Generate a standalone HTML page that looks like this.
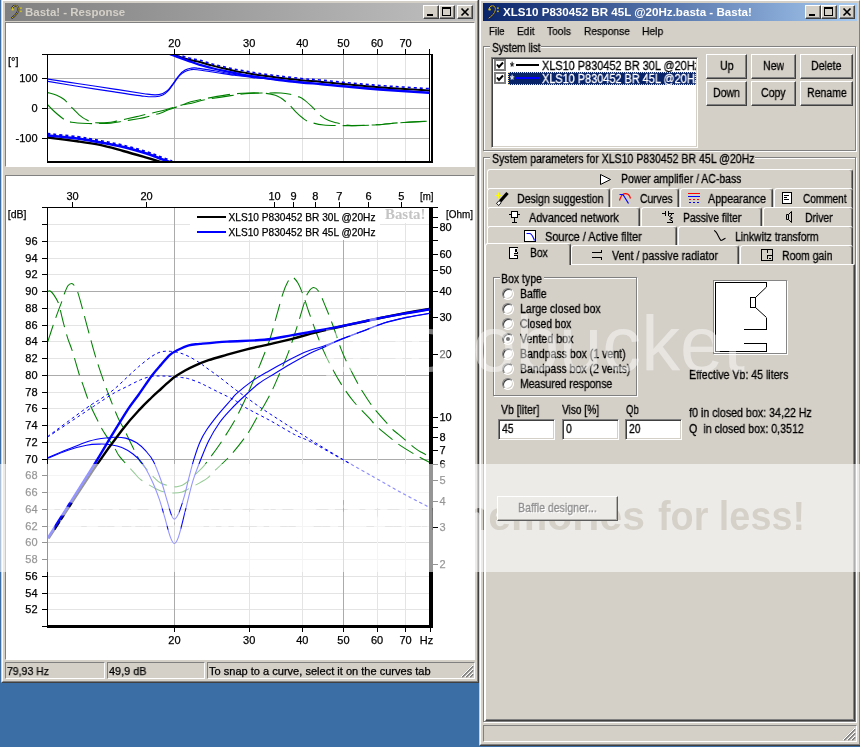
<!DOCTYPE html>
<html lang="en"><head><meta charset="utf-8"><title>Basta!</title>
<style>

html,body{margin:0;padding:0;background:#3a6ea5;}
#desk{position:relative;width:860px;height:747px;overflow:hidden;background:#3a6ea5;font-family:"Liberation Sans",sans-serif;}
#desk *{box-sizing:border-box;}
.abs,.t,.win,.btn,.tab,.grp,.sunk,.cap,.tbtn,.panel,.radio,.inp{position:absolute;}
.t{white-space:pre;line-height:14px;transform-origin:0 0;color:#000;will-change:transform;}
.ms{font:12.3px/14px "Liberation Sans",sans-serif;-webkit-text-stroke:.3px;}
.th{font:11px/14px "Liberation Sans",sans-serif;-webkit-text-stroke:.25px;}
.tb{font:bold 11px/14px "Liberation Sans",sans-serif;}
.win{background:#d4d0c8;}
.win .e1{position:absolute;left:0;top:0;right:0;bottom:0;border:1px solid;border-color:#d4d0c8 #404040 #404040 #d4d0c8;}
.win .e2{position:absolute;left:1px;top:1px;right:1px;bottom:1px;border:1px solid;border-color:#fff #808080 #808080 #fff;}
.cap{height:18px;}
.tbtn{width:16px;height:14px;background:#d4d0c8;border:1px solid;border-color:#fff #404040 #404040 #fff;box-shadow:inset -1px -1px 0 #808080;}
.panel{background:#fff;border:1px solid;border-color:#808080 #fff #fff #808080;}
.sb{position:absolute;border:1px solid;border-color:#808080 #fff #fff #808080;}
.btn{background:#d4d0c8;border:1px solid;border-color:#fff #404040 #404040 #fff;box-shadow:inset -1px -1px 0 #808080, inset 1px 1px 0 #d4d0c8;}
.grp{border:1px solid #808080;box-shadow:inset 1px 1px 0 #fff, 1px 1px 0 #fff;}
.sunk{background:#fff;border:1px solid;border-color:#808080 #fff #fff #808080;box-shadow:inset 1px 1px 0 #404040, inset -1px -1px 0 #d4d0c8;}
.tab{background:#d4d0c8;border:1px solid;border-color:#fff #404040 transparent #fff;border-bottom:0;border-radius:3px 3px 0 0;box-shadow:inset -1px 0 0 #808080;}
.radio{width:12px;height:12px;border-radius:50%;background:#fff;border:1px solid;border-color:#808080 #fff #fff #808080;box-shadow:inset 1px 1px 0 #404040, inset -1px -1px 0 #d4d0c8;}
.radio.on:after{content:"";position:absolute;left:3px;top:3px;width:4px;height:4px;border-radius:50%;background:#000;}
.chk{position:absolute;width:12px;height:12px;background:#fff;border:2px solid #808080;}
.g{background:#d4d0c8;}
svg{position:absolute;left:0;top:0;overflow:visible;}
svg.charts{left:0;top:0;will-change:transform;}

</style></head>
<body>
<div id="desk">
<div class="win" style="left:1px;top:-1px;width:478px;height:684px"><div class="e1"></div><div class="e2"></div></div>
<div class="cap abs" style="left:5px;top:3px;width:470px;background:linear-gradient(90deg,#808080,#c0c0c0)"></div>
<svg width="16" height="16" viewBox="0 0 16 16" style="left:9px;top:4px"><path d="M3.2,5.2C3,2.8 5,1.6 6.8,1.8C9.2,2 9.8,4.6 9,7C8,10 5.6,12.2 3,14" fill="none" stroke="#14144a" stroke-width="1.8" stroke-linecap="round"/><path d="M3.2,5.2C3,2.8 5,1.6 6.8,1.8C9.2,2 9.8,4.6 9,7C8,10 5.6,12.2 3,14" fill="none" stroke="#d0be10" stroke-width="1" stroke-linecap="round" stroke-dasharray="1.8 1"/><circle cx="3.6" cy="5.4" r="1.2" fill="#d8c818"/><rect x="11.2" y="3.4" width="1.5" height="1.5" fill="#d8c818"/><rect x="11.2" y="6.6" width="1.5" height="1.5" fill="#d8c818"/></svg>
<span class="t tb" style="left:24.6px;top:4.5px;transform:scaleX(1.044);color:#d4d0c8">Basta! - Response</span>
<div class="tbtn" style="left:423px;top:5px"><div class="abs" style="left:3px;top:8px;width:6px;height:2px;background:#000"></div></div>
<div class="tbtn" style="left:439px;top:5px"><div class="abs" style="left:2px;top:1px;width:9px;height:9px;border:1px solid #000;border-top-width:2px"></div></div>
<div class="tbtn" style="left:457px;top:5px"><svg width="14" height="12" viewBox="0 0 14 12" style="left:0;top:0"><path d="M3.5,2.5L10.5,9.5M10.5,2.5L3.5,9.5" stroke="#000" stroke-width="1.7" fill="none"/></svg></div>
<div class="panel" style="left:5px;top:22px;width:470px;height:145px"></div>
<div class="panel" style="left:5px;top:175px;width:470px;height:485px"></div>
<div class="sb" style="left:5px;top:662px;width:100px;height:17px"></div>
<div class="sb" style="left:107px;top:662px;width:98px;height:17px"></div>
<div class="sb" style="left:207px;top:662px;width:268px;height:17px"></div>
<span class="t th" style="left:7.0px;top:664.2px;transform:scaleX(0.954);">79,93 Hz</span>
<span class="t th" style="left:109.0px;top:664.2px;transform:scaleX(0.989);">49,9 dB</span>
<span class="t th" style="left:209.0px;top:664.2px;transform:scaleX(1.004);">To snap to a curve, select it on the curves tab</span>
<svg width="13" height="13" viewBox="0 0 13 13" style="left:461px;top:665px" shape-rendering="crispEdges"><path d="M12,1L1,12M12,5L5,12M12,9L9,12" stroke="#808080" stroke-width="2" fill="none" shape-rendering="auto"/><path d="M12,0L0,12M12,4L4,12M12,8L8,12" stroke="#fff" stroke-width="1" fill="none" shape-rendering="auto"/></svg>
<svg class="charts" width="480" height="690" viewBox="0 0 480 690" font-family="'Liberation Sans',sans-serif" font-size="11" stroke-width="0">
<defs><clipPath id="cpP"><rect x="48" y="55" width="381" height="107"/></clipPath><clipPath id="cpM"><rect x="48" y="208" width="381" height="417"/></clipPath></defs>
<g shape-rendering="crispEdges" stroke-width="1" fill="none">
<line x1="174.5" y1="55" x2="174.5" y2="161" stroke="#b4b4b4"/>
<line x1="249.5" y1="55" x2="249.5" y2="161" stroke="#e2e2e2"/>
<line x1="302.5" y1="55" x2="302.5" y2="161" stroke="#e2e2e2"/>
<line x1="343.5" y1="55" x2="343.5" y2="161" stroke="#b4b4b4"/>
<line x1="377.5" y1="55" x2="377.5" y2="161" stroke="#e2e2e2"/>
<line x1="405.5" y1="55" x2="405.5" y2="161" stroke="#e2e2e2"/>
<line x1="48" y1="78.5" x2="429" y2="78.5" stroke="#b4b4b4"/>
<line x1="48" y1="108.5" x2="429" y2="108.5" stroke="#b4b4b4"/>
<line x1="48" y1="138.5" x2="429" y2="138.5" stroke="#b4b4b4"/>
</g>
<g clip-path="url(#cpP)" fill="none">
<path d="M47.4,104.5C48.6,105.8 52.1,109.5 54.9,112.0C57.7,114.5 61.4,117.7 64.2,119.4C67.0,121.1 67.6,121.5 71.6,122.2C75.6,122.9 84.4,123.3 88.4,123.5C92.4,123.7 92.1,123.6 95.8,123.5C99.5,123.4 106.7,123.4 110.7,123.1C114.7,122.8 115.7,122.4 120.0,121.7C124.3,121.0 132.7,119.7 136.7,119.0C140.7,118.3 140.2,118.6 144.2,117.6C148.2,116.6 156.9,114.2 160.9,112.9C164.9,111.6 164.7,111.0 168.4,109.7C172.1,108.4 179.3,106.0 183.3,104.9C187.3,103.8 188.7,103.9 192.6,103.0C196.5,102.1 200.2,100.7 206.5,99.5C212.8,98.3 223.6,96.6 230.7,95.6C237.8,94.6 243.4,93.8 249.3,93.4C255.2,93.0 260.7,93.1 266.0,93.0C271.3,92.9 276.9,92.8 280.9,93.0C284.9,93.2 287.1,93.6 290.2,94.3C293.3,95.0 297.2,96.2 299.5,97.1C301.8,98.0 302.2,98.4 304.2,99.9C306.2,101.4 308.6,103.6 311.4,106.2C314.2,108.8 318.0,113.4 320.9,115.8C323.8,118.2 326.2,119.4 328.8,120.6C331.4,121.8 332.5,122.0 336.3,122.8C340.1,123.6 344.9,125.3 351.6,125.6C358.4,125.9 368.9,125.3 376.8,124.8C384.7,124.3 391.2,123.4 399.1,122.8C407.0,122.2 418.9,121.7 424.2,121.4C429.5,121.1 429.9,120.9 431.0,120.8" stroke="#008000" stroke-width="1.1" stroke-dasharray="22 7"/>
<path d="M47.4,92.4C49.0,92.9 53.9,94.0 56.7,95.2C59.5,96.4 62.0,97.8 64.2,99.5C66.4,101.2 67.3,103.0 69.8,105.5C72.3,108.0 76.2,112.3 79.1,114.8C82.0,117.3 84.6,119.0 87.4,120.3C90.2,121.6 91.9,122.5 95.8,122.8C99.7,123.1 106.7,122.6 110.7,122.2C114.7,121.8 115.7,121.2 120.0,120.3C124.3,119.4 132.7,117.5 136.7,116.6C140.7,115.7 140.2,115.7 144.2,114.8C148.2,113.9 156.6,112.1 160.9,111.0C165.2,109.9 166.5,109.4 170.2,108.3C173.9,107.2 179.9,105.6 183.3,104.5C186.7,103.4 186.8,102.7 190.7,101.7C194.6,100.7 199.8,99.6 206.5,98.4C213.2,97.2 223.6,95.2 230.7,94.3C237.8,93.4 243.4,93.2 249.3,93.0C255.2,92.8 261.7,93.0 266.0,93.4C270.3,93.8 272.8,94.4 275.3,95.2C277.8,96.0 279.1,96.9 280.9,98.0C282.7,99.1 284.8,101.0 286.0,101.9C287.2,102.8 286.8,101.9 288.4,103.6C290.0,105.2 293.3,109.3 295.8,111.8C298.3,114.3 301.0,116.8 303.3,118.5C305.6,120.2 306.4,120.9 309.8,122.0C313.2,123.1 318.1,124.4 323.7,125.0C329.3,125.6 338.6,125.5 343.3,125.6C348.0,125.7 346.0,125.7 351.6,125.6C357.2,125.5 368.9,125.3 376.8,124.8C384.7,124.3 391.2,123.4 399.1,122.8C407.0,122.2 418.9,121.7 424.2,121.4C429.5,121.1 429.9,120.9 431.0,120.8" stroke="#008000" stroke-width="1.1" stroke-dasharray="22 7"/>
<path d="M47.4,79.0C52.4,79.8 66.0,81.8 77.2,83.5C88.4,85.2 103.2,87.4 114.4,89.1C125.6,90.8 137.4,92.7 144.2,93.7C151.0,94.7 152.2,95.0 155.3,94.9C158.4,94.9 160.6,94.3 162.8,93.4C165.0,92.5 166.5,91.6 168.4,89.7C170.3,87.8 172.2,84.7 174.0,82.2C175.8,79.7 177.7,76.8 179.5,74.8C181.3,72.8 183.2,71.2 185.1,70.1C187.0,69.0 188.7,68.6 190.7,68.3C192.7,68.0 193.0,67.6 197.2,68.1C201.4,68.5 209.6,70.0 215.8,71.0C222.0,72.0 228.2,73.4 234.4,74.4C240.6,75.4 247.1,76.2 253.0,77.0C258.9,77.8 258.8,77.7 270.0,78.9C281.2,80.1 293.2,81.7 320.0,84.0C346.8,86.3 412.5,91.4 431.0,92.9" stroke="#0000ff" stroke-width="1.1"/>
<path d="M47.4,81.3C52.4,82.1 66.0,84.5 77.2,86.3C88.4,88.1 103.2,90.2 114.4,91.9C125.6,93.6 137.4,95.4 144.2,96.2C151.0,97.0 152.2,96.9 155.3,96.7C158.4,96.5 160.6,95.9 162.8,94.9C165.0,93.9 166.5,92.6 168.4,90.6C170.3,88.6 172.2,85.6 174.0,83.1C175.8,80.6 177.7,77.7 179.5,75.7C181.3,73.8 183.2,72.4 185.1,71.4C187.0,70.4 188.7,70.0 190.7,69.7C192.7,69.4 193.0,69.2 197.2,69.7C201.4,70.2 209.6,71.6 215.8,72.5C222.0,73.4 228.2,74.5 234.4,75.3C240.6,76.1 247.1,77.0 253.0,77.6C258.9,78.2 258.8,77.9 270.0,79.0C281.2,80.1 293.2,81.7 320.0,84.0C346.8,86.3 412.5,91.4 431.0,92.9" stroke="#0000ff" stroke-width="1.1"/>
<path d="M47.4,137.5C52.4,138.1 68.4,140.1 77.2,141.3C86.0,142.5 92.3,143.3 100.0,144.9C107.7,146.5 115.5,148.9 123.3,151.0C131.1,153.1 140.3,155.8 146.5,157.6C152.7,159.4 157.2,160.8 160.5,161.8C163.8,162.8 165.1,163.2 166.0,163.5" stroke="#000" stroke-width="2.4"/>
<path d="M47.4,135.5C52.4,136.0 68.4,137.3 77.2,138.5C86.0,139.7 92.3,141.0 100.0,142.4C107.7,143.8 115.5,145.2 123.3,147.1C131.1,148.9 140.3,151.6 146.5,153.5C152.7,155.4 156.6,157.3 160.5,158.7C164.4,160.1 167.9,161.3 169.8,162.0C171.7,162.7 171.6,162.8 172.0,163.0" stroke="#0000ff" stroke-width="2.6"/>
<path d="M47.4,133.9C52.4,134.4 68.4,135.8 77.2,136.9C86.0,138.1 92.3,139.4 100.0,140.8C107.7,142.2 115.5,143.7 123.3,145.5C131.1,147.3 140.3,150.0 146.5,151.9C152.7,153.8 156.6,155.7 160.5,157.1C164.4,158.5 167.9,159.7 169.8,160.4C171.7,161.1 171.6,161.2 172.0,161.4" stroke="#0000ff" stroke-width="2.2" stroke-dasharray="3 3"/>
<path d="M171.0,54.0C173.9,54.9 183.5,58.2 188.3,59.5C193.1,60.8 196.0,61.0 199.9,62.0C203.8,63.0 207.6,64.4 211.5,65.4C215.4,66.5 219.2,67.4 223.1,68.3C227.0,69.2 230.9,70.1 234.8,70.9C238.7,71.7 242.5,72.3 246.4,73.0C250.3,73.7 252.6,74.2 258.0,75.0C263.4,75.8 271.9,76.8 279.1,77.7C286.3,78.6 294.6,79.5 301.4,80.2C308.2,80.9 313.0,81.1 320.0,81.7C327.0,82.3 333.4,83.1 343.3,84.0C353.2,84.9 364.9,86.1 379.5,87.2C394.1,88.3 422.4,90.0 431.0,90.5" stroke="#000" stroke-width="2"/>
<path d="M170.0,54.2C171.1,54.6 173.5,55.6 176.6,56.7C179.7,57.8 184.4,59.4 188.3,60.8C192.2,62.2 196.0,63.7 199.9,64.9C203.8,66.1 207.6,67.0 211.5,68.0C215.4,69.0 219.2,69.9 223.1,70.7C227.0,71.5 230.9,72.2 234.8,73.0C238.7,73.8 242.5,74.6 246.4,75.3C250.3,76.0 252.6,76.3 258.0,77.1C263.4,77.9 271.9,79.1 279.1,80.0C286.3,80.9 294.6,81.8 301.4,82.5C308.2,83.2 313.0,83.4 320.0,84.0C327.0,84.6 333.4,85.4 343.3,86.3C353.2,87.2 364.9,88.4 379.5,89.5C394.1,90.6 422.4,92.3 431.0,92.9" stroke="#0000ff" stroke-width="2.3"/>
<path d="M171.0,52.3C173.9,53.2 183.5,56.5 188.3,57.8C193.1,59.1 196.0,59.3 199.9,60.3C203.8,61.3 207.6,62.7 211.5,63.7C215.4,64.8 219.2,65.7 223.1,66.6C227.0,67.5 230.9,68.4 234.8,69.2C238.7,70.0 242.5,70.6 246.4,71.3C250.3,72.0 252.6,72.5 258.0,73.3C263.4,74.1 271.9,75.1 279.1,76.0C286.3,76.9 294.6,77.8 301.4,78.5C308.2,79.2 313.0,79.4 320.0,80.0C327.0,80.6 333.4,81.4 343.3,82.3C353.2,83.2 364.9,84.4 379.5,85.5C394.1,86.6 422.4,88.2 431.0,88.8" stroke="#0000ff" stroke-width="1.6" stroke-dasharray="3 3"/>
</g>
<g shape-rendering="crispEdges" fill="#000">
<rect x="42" y="54" width="391" height="1"/>
<rect x="47" y="54" width="1" height="109"/>
<rect x="47" y="161" width="386" height="2"/>
<rect x="429" y="49" width="1" height="114"/>
<rect x="431" y="54" width="2" height="109"/>
<rect x="174" y="49" width="1" height="5"/>
<rect x="249" y="49" width="1" height="5"/>
<rect x="302" y="49" width="1" height="5"/>
<rect x="343" y="49" width="1" height="5"/>
<rect x="377" y="49" width="1" height="5"/>
<rect x="405" y="49" width="1" height="5"/>
<rect x="42" y="78" width="5" height="1"/>
<rect x="42" y="108" width="5" height="1"/>
<rect x="42" y="138" width="5" height="1"/>
</g>
<g fill="#000" stroke="#000" stroke-width=".25">
<text x="174.4" y="46.5" text-anchor="middle">20</text>
<text x="249.2" y="46.5" text-anchor="middle">30</text>
<text x="302.3" y="46.5" text-anchor="middle">40</text>
<text x="343.4" y="46.5" text-anchor="middle">50</text>
<text x="377.1" y="46.5" text-anchor="middle">60</text>
<text x="405.5" y="46.5" text-anchor="middle">70</text>
<text x="37.6" y="82.2" text-anchor="end">100</text>
<text x="37.6" y="112.0" text-anchor="end">0</text>
<text x="37.6" y="141.8" text-anchor="end">-100</text>
<text x="8" y="65">[°]</text>
</g>
<g shape-rendering="crispEdges" stroke-width="1" fill="none">
<line x1="48" y1="609.5" x2="429" y2="609.5" stroke="#e4e4e4"/>
<line x1="48" y1="593.5" x2="429" y2="593.5" stroke="#e4e4e4"/>
<line x1="48" y1="576.5" x2="429" y2="576.5" stroke="#e4e4e4"/>
<line x1="48" y1="559.5" x2="429" y2="559.5" stroke="#e4e4e4"/>
<line x1="48" y1="542.5" x2="429" y2="542.5" stroke="#ababab"/>
<line x1="48" y1="526.5" x2="429" y2="526.5" stroke="#e4e4e4"/>
<line x1="48" y1="509.5" x2="429" y2="509.5" stroke="#e4e4e4"/>
<line x1="48" y1="492.5" x2="429" y2="492.5" stroke="#e4e4e4"/>
<line x1="48" y1="475.5" x2="429" y2="475.5" stroke="#e4e4e4"/>
<line x1="48" y1="459.5" x2="429" y2="459.5" stroke="#ababab"/>
<line x1="48" y1="442.5" x2="429" y2="442.5" stroke="#e4e4e4"/>
<line x1="48" y1="425.5" x2="429" y2="425.5" stroke="#e4e4e4"/>
<line x1="48" y1="408.5" x2="429" y2="408.5" stroke="#e4e4e4"/>
<line x1="48" y1="392.5" x2="429" y2="392.5" stroke="#e4e4e4"/>
<line x1="48" y1="375.5" x2="429" y2="375.5" stroke="#ababab"/>
<line x1="48" y1="358.5" x2="429" y2="358.5" stroke="#e4e4e4"/>
<line x1="48" y1="341.5" x2="429" y2="341.5" stroke="#e4e4e4"/>
<line x1="48" y1="325.5" x2="429" y2="325.5" stroke="#e4e4e4"/>
<line x1="48" y1="308.5" x2="429" y2="308.5" stroke="#e4e4e4"/>
<line x1="48" y1="291.5" x2="429" y2="291.5" stroke="#ababab"/>
<line x1="48" y1="274.5" x2="429" y2="274.5" stroke="#e4e4e4"/>
<line x1="48" y1="258.5" x2="429" y2="258.5" stroke="#e4e4e4"/>
<line x1="48" y1="241.5" x2="429" y2="241.5" stroke="#e4e4e4"/>
<line x1="48" y1="224.5" x2="429" y2="224.5" stroke="#e4e4e4"/>
<line x1="174.5" y1="208" x2="174.5" y2="625" stroke="#ababab"/>
<line x1="249.5" y1="208" x2="249.5" y2="625" stroke="#e4e4e4"/>
<line x1="302.5" y1="208" x2="302.5" y2="625" stroke="#e4e4e4"/>
<line x1="343.5" y1="208" x2="343.5" y2="625" stroke="#ababab"/>
<line x1="377.5" y1="208" x2="377.5" y2="625" stroke="#e4e4e4"/>
<line x1="405.5" y1="208" x2="405.5" y2="625" stroke="#e4e4e4"/>
</g>
<rect x="190" y="208" width="190" height="32" fill="#fff"/><rect x="380" y="208" width="49" height="15" fill="#fff"/>
<g clip-path="url(#cpM)" fill="none">
<path d="M47.5,291.4C48.0,291.3 49.1,290.4 50.2,291.0C51.3,291.6 52.6,293.0 54.0,295.1C55.4,297.2 57.4,300.2 58.6,303.5C59.8,306.8 60.5,311.0 61.4,314.7C62.3,318.4 63.1,321.8 64.2,325.8C65.3,329.8 66.5,334.5 67.9,338.8C69.3,343.1 70.6,345.5 72.6,351.9C74.6,358.3 78.3,371.6 80.0,377.0C81.7,382.4 81.1,379.7 82.8,384.4C84.5,389.1 87.4,398.4 90.2,405.0C93.0,411.6 97.2,419.6 99.5,424.2C101.8,428.8 101.6,428.4 104.2,432.6C106.8,436.8 112.8,445.4 115.3,449.3C117.8,453.2 116.2,452.2 119.5,456.3C122.8,460.4 131.3,469.8 134.9,473.7C138.5,477.6 137.4,477.3 141.2,480.0C145.0,482.7 153.9,487.8 157.9,489.8C161.9,491.8 162.2,491.4 164.9,491.9C167.6,492.4 171.1,493.0 174.0,493.0C176.9,493.0 179.8,492.7 182.3,491.9C184.9,491.1 185.2,490.6 189.3,488.4C193.4,486.2 202.8,481.3 206.7,478.6C210.6,475.9 209.0,476.2 213.0,472.3C217.0,468.4 225.1,461.4 230.9,454.9C236.7,448.4 243.0,440.3 247.7,433.5C252.3,426.7 256.2,418.5 258.8,414.0C261.4,409.5 261.3,410.4 263.5,406.5C265.7,402.6 269.3,396.3 271.9,390.9C274.5,385.5 276.5,380.7 279.3,374.2C282.1,367.7 285.5,360.3 288.6,351.9C291.7,343.5 295.4,331.8 297.9,324.0C300.4,316.2 301.9,310.3 303.5,305.3C305.1,300.3 305.6,297.1 307.2,294.2C308.8,291.3 310.9,288.2 312.8,287.7C314.7,287.2 316.2,287.8 318.4,291.0C320.6,294.2 323.3,301.3 325.8,307.2C328.3,313.1 330.8,319.7 333.3,326.5C335.8,333.3 338.5,342.3 340.7,348.1C342.9,353.9 343.8,355.9 346.3,361.2C348.8,366.5 353.0,374.5 355.8,379.8C358.6,385.1 360.8,388.8 363.3,392.8C365.8,396.8 368.5,400.9 370.7,404.0C372.9,407.1 372.9,407.2 376.3,411.2C379.7,415.2 387.5,424.0 391.2,427.9C394.9,431.8 394.6,431.0 398.6,434.4C402.6,437.8 411.3,445.3 415.3,448.4C419.3,451.5 420.2,451.5 422.8,453.0C425.4,454.5 429.6,456.8 431.0,457.5" stroke="#008000" stroke-width="1.05" stroke-dasharray="17.5 7.5"/>
<path d="M47.8,341.6C49.0,338.0 52.6,326.7 54.9,320.2C57.2,313.7 59.8,306.9 61.4,302.6C63.0,298.3 63.1,297.0 64.2,294.2C65.3,291.4 66.7,287.6 67.9,285.8C69.1,284.0 70.5,283.4 71.6,283.4C72.7,283.4 73.3,284.1 74.4,285.8C75.5,287.5 76.7,289.3 78.1,293.3C79.5,297.3 80.9,303.2 82.8,310.0C84.7,316.8 87.1,326.3 89.3,334.2C91.5,342.1 93.3,349.3 95.8,357.4C98.3,365.5 101.7,375.5 104.2,382.6C106.7,389.7 108.4,394.1 110.7,400.0C113.0,405.9 115.9,413.2 118.1,418.0C120.3,422.8 121.8,424.8 123.7,428.5C125.6,432.2 127.2,435.7 129.3,440.0C131.4,444.3 134.4,450.6 136.3,454.2C138.2,457.8 137.5,457.9 140.5,461.9C143.5,465.8 150.9,474.3 154.4,477.9C157.9,481.5 158.1,482.0 161.4,483.5C164.7,485.0 171.1,486.2 174.0,486.7C176.9,487.2 177.0,486.8 178.8,486.3C180.7,485.8 181.2,486.5 185.1,483.5C188.9,480.5 198.2,471.8 201.9,468.1C205.6,464.4 204.4,465.2 207.4,461.2C210.4,457.2 215.2,451.0 219.8,444.2C224.4,437.4 230.7,427.6 234.7,420.5C238.7,413.4 241.2,407.8 244.0,401.9C246.8,396.0 248.6,391.8 251.4,385.3C254.2,378.8 257.6,370.8 260.7,363.0C263.8,355.2 267.2,347.2 270.0,338.8C272.8,330.4 275.2,320.4 277.4,312.8C279.6,305.2 281.3,298.4 283.0,293.3C284.7,288.2 286.2,284.8 287.7,282.1C289.2,279.4 290.3,277.0 292.0,277.1C293.7,277.2 296.0,279.9 297.9,283.0C299.8,286.1 301.6,291.0 303.5,296.0C305.4,301.0 306.9,306.6 309.1,312.8C311.3,319.0 314.0,326.8 316.5,333.3C319.0,339.8 321.2,345.7 324.0,351.9C326.8,358.1 330.2,364.8 333.3,370.5C336.4,376.2 339.2,381.1 342.6,386.3C346.1,391.6 349.5,396.6 354.0,402.0C358.5,407.4 366.1,414.6 369.8,418.6C373.5,422.6 372.4,422.4 376.3,426.0C380.2,429.6 389.0,436.7 393.0,440.0C397.0,443.3 396.5,443.0 400.5,445.6C404.5,448.2 412.1,452.9 417.2,455.8C422.3,458.7 428.7,461.8 431.0,463.0" stroke="#008000" stroke-width="1.05" stroke-dasharray="17.5 7.5"/>
<path d="M47.5,436.6C53.9,431.9 76.6,415.0 85.6,408.6C94.6,402.2 96.6,401.7 101.4,398.4C106.2,395.1 110.1,392.6 114.4,389.0C118.7,385.4 123.4,380.7 127.4,377.0C131.4,373.3 134.6,370.1 138.6,366.7C142.6,363.3 147.9,359.0 151.6,356.5C155.3,354.0 157.8,352.8 160.9,351.9C164.0,351.0 167.1,351.1 170.2,351.3C173.3,351.5 176.4,351.9 179.5,352.8C182.6,353.7 185.4,354.8 188.8,356.5C192.2,358.2 197.3,361.3 200.0,363.0C202.7,364.7 201.9,364.5 204.9,366.7C207.9,368.9 212.9,372.3 217.9,376.0C222.9,379.7 229.7,385.4 234.7,389.1C239.7,392.8 243.4,395.3 247.7,398.4C252.0,401.5 254.8,403.7 260.7,407.7C266.6,411.7 274.6,416.9 283.0,422.3C291.4,427.7 301.0,433.9 310.9,440.0C320.8,446.1 332.0,453.0 342.6,459.2C353.2,465.4 364.4,471.6 374.4,477.2C384.3,482.8 392.9,487.9 402.3,493.0C411.7,498.1 426.2,505.5 431.0,508.0" stroke="#0000ff" stroke-width="1" stroke-dasharray="3 3"/>
<path d="M47.5,437.2C54.6,432.4 81.2,414.6 90.2,408.6C99.2,402.6 97.4,403.8 101.4,401.2C105.4,398.6 110.1,395.3 114.4,392.8C118.7,390.3 123.1,388.5 127.4,386.3C131.8,384.1 136.5,381.5 140.5,379.8C144.5,378.1 148.2,377.0 151.6,376.4C155.0,375.8 157.8,376.0 160.9,376.0C164.0,376.0 166.8,376.1 170.2,376.4C173.6,376.6 178.3,377.1 181.4,377.5C184.5,377.9 185.7,377.9 188.8,378.8C191.9,379.7 197.3,381.8 200.0,382.9C202.7,384.0 201.6,383.6 204.9,385.3C208.2,387.0 214.8,390.3 219.8,392.8C224.8,395.3 230.4,397.7 234.7,400.2C239.0,402.7 239.9,404.3 245.8,407.7C251.7,411.1 261.9,416.1 270.0,420.5C278.1,424.9 287.4,430.8 294.2,434.4C301.0,438.0 302.8,437.7 310.9,441.9C319.0,446.1 332.0,453.7 342.6,459.6C353.2,465.6 364.4,472.0 374.4,477.6C384.3,483.2 392.9,488.3 402.3,493.4C411.7,498.5 426.2,505.9 431.0,508.4" stroke="#0000ff" stroke-width="1" stroke-dasharray="3 3"/>
<path d="M47.8,457.7C51.1,456.3 61.5,451.9 67.9,449.3C74.4,446.7 80.9,443.7 86.5,441.9C92.1,440.1 96.8,439.3 101.4,438.5C106.1,437.7 110.4,437.3 114.4,437.2C118.4,437.1 121.9,437.2 125.6,438.1C129.3,439.0 133.3,440.6 136.7,442.8C140.1,445.0 143.2,448.1 146.0,451.2C148.8,454.3 151.0,456.6 153.5,461.4C156.0,466.2 158.7,473.8 160.9,480.0C163.1,486.2 164.8,492.9 166.5,498.6C168.2,504.3 169.9,511.0 171.2,514.4C172.5,517.8 173.1,519.2 174.3,519.1C175.5,519.0 176.9,517.2 178.6,513.5C180.2,509.8 182.5,502.6 184.2,496.7C185.9,490.8 187.1,484.6 188.8,478.1C190.5,471.6 192.5,463.7 194.4,457.7C196.3,451.7 197.9,446.5 200.0,441.9C202.1,437.2 203.7,434.3 206.7,429.8C209.7,425.3 213.9,419.9 217.9,414.9C221.9,409.9 227.8,403.5 230.9,400.0C234.0,396.5 233.1,396.8 236.5,393.7C239.9,390.6 246.1,385.3 251.4,381.6C256.7,377.9 262.2,374.8 268.1,371.4C274.0,368.0 280.5,364.4 286.7,361.2C292.9,357.9 299.1,354.4 305.3,351.9C311.5,349.3 318.4,347.9 324.0,345.9C329.6,343.9 332.6,342.4 338.8,340.0C345.0,337.6 353.9,334.3 361.4,331.5C368.9,328.7 376.3,325.4 383.7,323.0C391.1,320.6 398.1,319.1 406.0,317.4C413.9,315.7 426.8,313.7 431.0,313.0" stroke="#0000ff" stroke-width="1.1"/>
<path d="M47.8,458.3C51.1,456.9 61.5,452.4 67.9,450.2C74.4,448.0 81.2,446.2 86.5,445.2C91.8,444.2 95.5,444.2 99.5,444.1C103.5,444.0 107.0,444.1 110.7,444.7C114.4,445.2 118.2,445.8 121.9,447.4C125.6,448.9 129.6,451.4 133.0,454.0C136.4,456.6 139.2,459.0 142.3,463.3C145.4,467.6 148.8,474.1 151.6,480.0C154.4,485.9 156.9,492.4 159.1,498.6C161.3,504.8 162.8,510.9 164.7,517.2C166.5,523.5 168.6,532.2 170.2,536.6C171.8,541.0 172.9,543.5 174.3,543.5C175.7,543.5 176.8,541.9 178.6,536.6C180.4,531.3 182.8,520.7 185.1,511.6C187.4,502.5 190.2,489.9 192.6,481.9C195.0,473.8 196.6,470.1 199.3,463.3C202.0,456.5 205.2,447.7 208.6,440.9C212.0,434.1 216.1,427.6 219.8,422.3C223.5,417.0 226.9,413.6 230.9,409.3C234.9,405.0 239.3,400.8 244.0,396.5C248.7,392.2 253.9,387.2 258.8,383.5C263.8,379.8 268.4,377.4 273.7,374.2C279.0,370.9 284.6,367.4 290.5,364.0C296.4,360.6 303.5,356.5 309.1,353.7C314.7,350.9 319.1,349.4 324.0,347.2C328.9,345.0 332.6,343.0 338.8,340.4C345.0,337.8 353.9,334.6 361.4,331.8C368.9,329.0 376.3,325.7 383.7,323.3C391.1,320.9 398.1,319.3 406.0,317.6C413.9,315.9 426.8,313.9 431.0,313.2" stroke="#0000ff" stroke-width="1.1"/>
<path d="M48.6,538.4C56.6,526.2 83.9,483.8 96.4,465.4C108.9,447.0 116.4,437.4 123.7,427.9C131.1,418.4 135.8,413.7 140.5,408.6C145.2,403.5 148.2,400.8 151.6,397.5C155.0,394.2 157.8,391.8 160.9,389.0C164.0,386.2 167.9,382.7 170.2,380.7C172.5,378.7 172.0,378.7 174.5,377.0C177.0,375.3 181.8,372.4 185.1,370.5C188.4,368.6 190.5,367.5 194.4,365.8C198.3,364.1 203.1,362.1 208.6,360.2C214.1,358.3 221.0,356.5 227.2,354.7C233.4,352.9 239.6,351.2 245.8,349.6C252.0,348.0 256.6,347.1 264.4,345.3C272.1,343.5 284.6,340.8 292.3,338.8C300.1,336.9 304.7,335.2 310.9,333.6C317.1,332.0 323.0,330.5 329.5,329.0C336.0,327.5 342.5,326.2 350.0,324.6C357.5,323.0 365.7,321.0 374.4,319.2C383.1,317.4 392.9,315.5 402.3,313.7C411.7,311.9 426.2,309.5 431.0,308.6" stroke="#000" stroke-width="2.4"/>
<path d="M47.8,538.0C55.5,525.8 83.5,481.8 94.0,465.0C104.5,448.2 105.0,446.6 110.7,437.2C116.4,427.8 123.8,415.7 128.4,408.6C133.1,401.5 134.7,400.1 138.6,394.7C142.5,389.3 147.9,381.0 151.6,376.0C155.3,371.0 157.8,368.4 160.9,364.9C164.0,361.3 167.4,357.2 170.2,354.7C173.0,352.2 174.6,351.6 177.7,350.0C180.8,348.4 185.1,346.3 188.8,345.3C192.5,344.3 193.6,344.5 200.0,343.9C206.4,343.3 216.5,342.3 227.2,341.6C237.9,340.9 253.5,340.9 264.4,339.8C275.2,338.7 283.0,336.7 292.3,335.1C301.6,333.5 311.8,331.9 320.2,330.3C328.6,328.8 333.8,327.7 342.8,325.8C351.8,323.9 364.5,321.2 374.4,319.2C384.3,317.2 392.9,315.6 402.3,313.9C411.7,312.2 426.2,310.0 431.0,309.2" stroke="#0000ff" stroke-width="2.4"/>
</g>
<g shape-rendering="crispEdges" fill="#000">
<rect x="42" y="207" width="396" height="1"/>
<rect x="47" y="207" width="1" height="420"/>
<rect x="47" y="625" width="386" height="3"/>
<rect x="429" y="207" width="4" height="421"/>
<rect x="72" y="202" width="1" height="5"/>
<rect x="146" y="202" width="1" height="5"/>
<rect x="274" y="202" width="1" height="5"/>
<rect x="293" y="202" width="1" height="5"/>
<rect x="315" y="202" width="1" height="5"/>
<rect x="339" y="202" width="1" height="5"/>
<rect x="368" y="202" width="1" height="5"/>
<rect x="401" y="202" width="1" height="5"/>
<rect x="174" y="628" width="1" height="4"/>
<rect x="249" y="628" width="1" height="4"/>
<rect x="302" y="628" width="1" height="4"/>
<rect x="343" y="628" width="1" height="4"/>
<rect x="377" y="628" width="1" height="4"/>
<rect x="405" y="628" width="1" height="4"/>
<rect x="430" y="628" width="1" height="4"/>
<rect x="42" y="626" width="5" height="1"/>
<rect x="42" y="609" width="5" height="1"/>
<rect x="42" y="593" width="5" height="1"/>
<rect x="42" y="576" width="5" height="1"/>
<rect x="42" y="559" width="5" height="1"/>
<rect x="42" y="542" width="5" height="1"/>
<rect x="42" y="526" width="5" height="1"/>
<rect x="42" y="509" width="5" height="1"/>
<rect x="42" y="492" width="5" height="1"/>
<rect x="42" y="475" width="5" height="1"/>
<rect x="42" y="459" width="5" height="1"/>
<rect x="42" y="442" width="5" height="1"/>
<rect x="42" y="425" width="5" height="1"/>
<rect x="42" y="408" width="5" height="1"/>
<rect x="42" y="392" width="5" height="1"/>
<rect x="42" y="375" width="5" height="1"/>
<rect x="42" y="358" width="5" height="1"/>
<rect x="42" y="341" width="5" height="1"/>
<rect x="42" y="325" width="5" height="1"/>
<rect x="42" y="308" width="5" height="1"/>
<rect x="42" y="291" width="5" height="1"/>
<rect x="42" y="274" width="5" height="1"/>
<rect x="42" y="258" width="5" height="1"/>
<rect x="42" y="241" width="5" height="1"/>
<rect x="42" y="224" width="5" height="1"/>
<rect x="433" y="564" width="5" height="1"/>
<rect x="433" y="527" width="5" height="1"/>
<rect x="433" y="501" width="5" height="1"/>
<rect x="433" y="480" width="5" height="1"/>
<rect x="433" y="464" width="5" height="1"/>
<rect x="433" y="450" width="5" height="1"/>
<rect x="433" y="437" width="5" height="1"/>
<rect x="433" y="427" width="5" height="1"/>
<rect x="433" y="417" width="5" height="1"/>
<rect x="433" y="354" width="5" height="1"/>
<rect x="433" y="317" width="5" height="1"/>
<rect x="433" y="291" width="5" height="1"/>
<rect x="433" y="270" width="5" height="1"/>
<rect x="433" y="254" width="5" height="1"/>
<rect x="433" y="240" width="5" height="1"/>
<rect x="433" y="227" width="5" height="1"/>
<rect x="433" y="217" width="5" height="1"/>
</g>
<g fill="#000" stroke="#000" stroke-width=".25">
<text x="72.6" y="200" text-anchor="middle">30</text>
<text x="146.6" y="200" text-anchor="middle">20</text>
<text x="274.5" y="200" text-anchor="middle">10</text>
<text x="293.5" y="200" text-anchor="middle">9</text>
<text x="315.3" y="200" text-anchor="middle">8</text>
<text x="339.4" y="200" text-anchor="middle">7</text>
<text x="368.5" y="200" text-anchor="middle">6</text>
<text x="401.4" y="200" text-anchor="middle">5</text>
<text x="420" y="200" textLength="13.5" lengthAdjust="spacingAndGlyphs">[m]</text>
<text x="7.8" y="218" textLength="18.7" lengthAdjust="spacingAndGlyphs">[dB]</text>
<text x="446" y="218" textLength="27" lengthAdjust="spacingAndGlyphs">[Ohm]</text>
<text x="37.6" y="613.4" text-anchor="end">52</text>
<text x="37.6" y="597.4" text-anchor="end">54</text>
<text x="37.6" y="580.4" text-anchor="end">56</text>
<text x="37.6" y="563.4" text-anchor="end">58</text>
<text x="37.6" y="546.4" text-anchor="end">60</text>
<text x="37.6" y="530.4" text-anchor="end">62</text>
<text x="37.6" y="513.4" text-anchor="end">64</text>
<text x="37.6" y="496.4" text-anchor="end">66</text>
<text x="37.6" y="479.4" text-anchor="end">68</text>
<text x="37.6" y="463.4" text-anchor="end">70</text>
<text x="37.6" y="446.4" text-anchor="end">72</text>
<text x="37.6" y="429.4" text-anchor="end">74</text>
<text x="37.6" y="412.4" text-anchor="end">76</text>
<text x="37.6" y="396.4" text-anchor="end">78</text>
<text x="37.6" y="379.4" text-anchor="end">80</text>
<text x="37.6" y="362.4" text-anchor="end">82</text>
<text x="37.6" y="345.4" text-anchor="end">84</text>
<text x="37.6" y="329.4" text-anchor="end">86</text>
<text x="37.6" y="312.4" text-anchor="end">88</text>
<text x="37.6" y="295.4" text-anchor="end">90</text>
<text x="37.6" y="278.4" text-anchor="end">92</text>
<text x="37.6" y="262.4" text-anchor="end">94</text>
<text x="37.6" y="245.4" text-anchor="end">96</text>
<text x="439.5" y="568.3">2</text>
<text x="439.5" y="531.3">3</text>
<text x="439.5" y="505.3">4</text>
<text x="439.5" y="484.3">5</text>
<text x="439.5" y="468.3">6</text>
<text x="439.5" y="454.3">7</text>
<text x="439.5" y="441.3">8</text>
<text x="439.5" y="421.3">10</text>
<text x="439.5" y="358.3">20</text>
<text x="439.5" y="321.3">30</text>
<text x="439.5" y="295.3">40</text>
<text x="439.5" y="274.3">50</text>
<text x="439.5" y="258.3">60</text>
<text x="439.5" y="231.3">80</text>
<text x="174.4" y="644" text-anchor="middle">20</text>
<text x="249.2" y="644" text-anchor="middle">30</text>
<text x="302.3" y="644" text-anchor="middle">40</text>
<text x="343.4" y="644" text-anchor="middle">50</text>
<text x="377.1" y="644" text-anchor="middle">60</text>
<text x="405.5" y="644" text-anchor="middle">70</text>
<text x="426.5" y="644" text-anchor="middle">Hz</text>
</g>
<g shape-rendering="crispEdges"><rect x="197" y="216" width="29" height="2" fill="#000"/><rect x="197" y="231" width="29" height="2" fill="#0000ff"/></g>
<text stroke="#000" stroke-width=".25" x="228.5" y="221" textLength="147" lengthAdjust="spacingAndGlyphs">XLS10 P830452 BR 30L @20Hz</text>
<text stroke="#000" stroke-width=".25" x="228.5" y="236" textLength="147" lengthAdjust="spacingAndGlyphs">XLS10 P830452 BR 45L @20Hz</text>
<text x="385" y="219" font-family="'Liberation Serif',serif" font-size="15.5" font-weight="bold" fill="#c4c4c4" textLength="40.5" lengthAdjust="spacingAndGlyphs">Basta!</text>
</svg>
<div class="win" style="left:479px;top:-1px;width:382px;height:747px"><div class="e1"></div><div class="e2"></div></div>
<div class="cap abs" style="left:483px;top:3px;width:374px;background:linear-gradient(90deg,#0a246a,#a6caf0)"></div>
<svg width="16" height="16" viewBox="0 0 16 16" style="left:486px;top:4px"><path d="M3.2,5.2C3,2.8 5,1.6 6.8,1.8C9.2,2 9.8,4.6 9,7C8,10 5.6,12.2 3,14" fill="none" stroke="#14144a" stroke-width="1.8" stroke-linecap="round"/><path d="M3.2,5.2C3,2.8 5,1.6 6.8,1.8C9.2,2 9.8,4.6 9,7C8,10 5.6,12.2 3,14" fill="none" stroke="#d0be10" stroke-width="1" stroke-linecap="round" stroke-dasharray="1.8 1"/><circle cx="3.6" cy="5.4" r="1.2" fill="#d8c818"/><rect x="11.2" y="3.4" width="1.5" height="1.5" fill="#d8c818"/><rect x="11.2" y="6.6" width="1.5" height="1.5" fill="#d8c818"/></svg>
<span class="t tb" style="left:502.8px;top:4.5px;transform:scaleX(1.054);color:#fff">XLS10 P830452 BR 45L @20Hz.basta - Basta!</span>
<div class="tbtn" style="left:805px;top:5px"><div class="abs" style="left:3px;top:8px;width:6px;height:2px;background:#000"></div></div>
<div class="tbtn" style="left:821px;top:5px"><div class="abs" style="left:2px;top:1px;width:9px;height:9px;border:1px solid #000;border-top-width:2px"></div></div>
<div class="tbtn" style="left:839px;top:5px"><svg width="14" height="12" viewBox="0 0 14 12" style="left:0;top:0"><path d="M3.5,2.5L10.5,9.5M10.5,2.5L3.5,9.5" stroke="#000" stroke-width="1.7" fill="none"/></svg></div>
<span class="t th" style="left:488.5px;top:24.2px;transform:scaleX(0.880);">File</span>
<span class="t th" style="left:516.6px;top:24.2px;transform:scaleX(0.923);">Edit</span>
<span class="t th" style="left:547.3px;top:24.2px;transform:scaleX(0.930);">Tools</span>
<span class="t th" style="left:583.6px;top:24.2px;transform:scaleX(0.924);">Response</span>
<span class="t th" style="left:642.2px;top:24.2px;transform:scaleX(0.937);">Help</span>
<div class="grp" style="left:483px;top:46px;width:373px;height:105px"></div>
<div class="g abs" style="left:490px;top:43px;width:51px;height:10px"></div>
<span class="t ms" style="left:491.7px;top:40.7px;transform:scaleX(0.816);">System list</span>
<div class="grp" style="left:483px;top:157px;width:373px;height:565px"></div>
<div class="g abs" style="left:490px;top:154px;width:265px;height:10px"></div>
<span class="t ms" style="left:491.5px;top:151.7px;transform:scaleX(0.858);">System parameters for XLS10 P830452 BR 45L @20Hz</span>
<div class="sunk" style="left:491px;top:57px;width:207px;height:91px"></div>
<div class="abs" style="left:493px;top:59px;width:203px;height:87px;overflow:hidden"><div class="abs" style="left:15px;top:13px;width:188px;height:13px;background:#0a246a;outline:1px dotted #f5db95;outline-offset:-1px"></div><span class="t ms" style="left:48.8px;top:-0.3px;transform:scaleX(0.887);">XLS10 P830452 BR 30L @20Hz</span><span class="t ms" style="left:48.8px;top:12.7px;transform:scaleX(0.887);color:#fff">XLS10 P830452 BR 45L @20Hz</span><span class="t ms" style="left:16.5px;top:1.2px;transform:scaleX(0.855);">*</span><span class="t ms" style="left:16.5px;top:14.2px;transform:scaleX(0.855);color:#fff">*</span><div class="abs" style="left:23px;top:5px;width:23px;height:2px;background:#000"></div><div class="abs" style="left:23px;top:18px;width:23px;height:2px;background:#0000ff"></div><div class="chk" style="left:1px;top:0px"></div><div class="chk" style="left:1px;top:13px"></div><svg width="13" height="26" viewBox="0 0 13 26" style="left:1px;top:0"><path d="M3,5.5L5,8L9,3.5" stroke="#000" stroke-width="1.9" fill="none"/><path d="M3,18.5L5,21L9,16.5" stroke="#000" stroke-width="1.9" fill="none"/></svg></div>
<div class="btn" style="left:706px;top:54px;width:41px;height:25px"></div><span class="t ms" style="left:719.8px;top:59.0px;transform:scaleX(0.855);">Up</span>
<div class="btn" style="left:706px;top:81px;width:41px;height:25px"></div><span class="t ms" style="left:713.1px;top:86.0px;transform:scaleX(0.855);">Down</span>
<div class="btn" style="left:751px;top:54px;width:45px;height:25px"></div><span class="t ms" style="left:763.0px;top:59.0px;transform:scaleX(0.855);">New</span>
<div class="btn" style="left:751px;top:81px;width:45px;height:25px"></div><span class="t ms" style="left:761.2px;top:86.0px;transform:scaleX(0.855);">Copy</span>
<div class="btn" style="left:800px;top:54px;width:53px;height:25px"></div><span class="t ms" style="left:811.3px;top:59.0px;transform:scaleX(0.855);">Delete</span>
<div class="btn" style="left:800px;top:81px;width:53px;height:25px"></div><span class="t ms" style="left:806.6px;top:86.0px;transform:scaleX(0.855);">Rename</span>
<div class="tab" style="left:487px;top:169px;width:366px;height:20px"></div>
<div class="tab" style="left:487px;top:188px;width:123px;height:20px"></div>
<div class="tab" style="left:611px;top:188px;width:68px;height:20px"></div>
<div class="tab" style="left:680px;top:188px;width:93px;height:20px"></div>
<div class="tab" style="left:774px;top:188px;width:79px;height:20px"></div>
<div class="tab" style="left:487px;top:207px;width:153px;height:20px"></div>
<div class="tab" style="left:641px;top:207px;width:121px;height:20px"></div>
<div class="tab" style="left:763px;top:207px;width:90px;height:20px"></div>
<div class="tab" style="left:487px;top:226px;width:190px;height:20px"></div>
<div class="tab" style="left:678px;top:226px;width:175px;height:20px"></div>
<div class="tab" style="left:571px;top:245px;width:168px;height:20px"></div>
<div class="tab" style="left:740px;top:245px;width:113px;height:20px"></div>
<div class="abs" style="left:485px;top:264px;width:370px;height:457px;background:#d4d0c8;border:1px solid;border-color:#fff #404040 #404040 #fff;box-shadow:inset -1px -1px 0 #808080"></div>
<div class="tab" style="left:485px;top:243px;width:86px;height:22px"></div>
<div class="abs g" style="left:486px;top:263px;width:83px;height:3px"></div>
<span class="t ms" style="left:620.7px;top:172.4px;transform:scaleX(0.851);">Power amplifier / AC-bass</span>
<span class="t ms" style="left:516.5px;top:191.6px;transform:scaleX(0.855);">Design suggestion</span>
<span class="t ms" style="left:639.5px;top:191.6px;transform:scaleX(0.837);">Curves</span>
<span class="t ms" style="left:708.1px;top:191.6px;transform:scaleX(0.874);">Appearance</span>
<span class="t ms" style="left:802.6px;top:191.6px;transform:scaleX(0.816);">Comment</span>
<span class="t ms" style="left:529.0px;top:210.6px;transform:scaleX(0.888);">Advanced network</span>
<span class="t ms" style="left:682.6px;top:210.6px;transform:scaleX(0.836);">Passive filter</span>
<span class="t ms" style="left:804.8px;top:210.6px;transform:scaleX(0.842);">Driver</span>
<span class="t ms" style="left:544.5px;top:229.8px;transform:scaleX(0.891);">Source / Active filter</span>
<span class="t ms" style="left:734.5px;top:229.8px;transform:scaleX(0.843);">Linkwitz transform</span>
<span class="t ms" style="left:529.7px;top:246.4px;transform:scaleX(0.835);">Box</span>
<span class="t ms" style="left:611.5px;top:248.6px;transform:scaleX(0.871);">Vent / passive radiator</span>
<span class="t ms" style="left:781.6px;top:248.6px;transform:scaleX(0.848);">Room gain</span>
<svg width="380" height="110" viewBox="480 160 380 110" style="left:480px;top:160px" fill="none" stroke="#000" stroke-width="1">
<path d="M600.5,174.5V184.5L610.5,179.5Z" fill="#fff"/>
<path d="M500.2,201.3L507.5,193" stroke-width="3.2"/><path d="M496.5,203.5L498.8,205.5L501.2,202.6L499,200.6Z" fill="#fff" stroke-width=".9"/><path d="M498.5,192.5V198.5M495.5,195.5H501.5" stroke="#ffff00" stroke-width="1.1"/>
<path d="M619.5,200.5C620.5,197 622,194.5 624,193.8C627,193 629.5,194.5 630.5,198.5" stroke="#ff0000" stroke-width="1.2"/><path d="M619.5,194.5H623L628.5,203.5" stroke="#0000ff" stroke-width="1.2"/>
<g shape-rendering="crispEdges"><path d="M688,193.5H700" stroke="#ff0000"/><path d="M688,196.5H700" stroke="#0000ff"/><path d="M689,199.5H699" stroke="#ff0000" stroke-dasharray="2 2"/><path d="M689,202.5H699" stroke="#0000ff" stroke-dasharray="2 2"/></g>
<g shape-rendering="crispEdges"><rect x="782.5" y="192.5" width="9" height="11" fill="#fff"/><path d="M784,195.5H789M784,197.5H787M784,199.5H789"/></g>
<g shape-rendering="crispEdges"><rect x="511.5" y="211.5" width="6" height="6" fill="#fff"/><path d="M509,214.5H511M518,214.5H520M514.5,218V222M512,222.5H517"/></g>
<g shape-rendering="crispEdges"><path d="M662,213.5H665M665.5,211V216M668.5,211V216M669,213.5H674"/></g><path d="M671.5,213.5V215L669.5,216.5L672.5,218L669.5,219.5L672.5,221V222.5M667,222.5H673"/>
<path d="M786.5,214.5H788.5V219.5H786.5ZM788.5,214.5L791.5,211.5V222.5L788.5,219.5"/>
<rect x="524.5" y="230.5" width="11" height="11" fill="#fff" shape-rendering="crispEdges"/><path d="M526.5,233.5H529.5C532,233.5 533,237 534.5,240.5" stroke="#0000ff" stroke-width="1.2"/>
<path d="M714,230.5C717,231 718.5,238 721,240.5C722.5,240.5 723.5,238.8 725.5,238.2" stroke-width="1.1"/>
<g shape-rendering="crispEdges"><path d="M517.5,247.5H509.5V258.5H517.5V255.5H514M514,253.5H517.5V252" fill="#fff"/><rect x="515" y="249" width="2" height="3" fill="#000" stroke="none"/></g>
<g shape-rendering="crispEdges"><path d="M592,252.5H601M592,257.5H601M601.5,250V253M601.5,257V260"/></g>
<g shape-rendering="crispEdges"><rect x="761.5" y="249.5" width="11" height="11"/><path d="M767.5,250V253M767.5,255.5H772M767.5,255V259M769,258.5H771"/></g>
</svg>
<div class="grp" style="left:493px;top:277px;width:144px;height:119px"></div>
<div class="g abs" style="left:500px;top:274px;width:44px;height:10px"></div>
<span class="t ms" style="left:501.4px;top:271.7px;transform:scaleX(0.855);">Box type</span>
<div class="radio" style="left:502px;top:288px"></div>
<span class="t ms" style="left:519.8px;top:286.6px;transform:scaleX(0.848);">Baffle</span>
<div class="radio" style="left:502px;top:303px"></div>
<span class="t ms" style="left:519.8px;top:301.6px;transform:scaleX(0.861);">Large closed box</span>
<div class="radio" style="left:502px;top:318px"></div>
<span class="t ms" style="left:519.8px;top:316.6px;transform:scaleX(0.835);">Closed box</span>
<div class="radio on" style="left:502px;top:333px"></div>
<span class="t ms" style="left:519.8px;top:331.6px;transform:scaleX(0.868);">Vented box</span>
<div class="radio" style="left:502px;top:348px"></div>
<span class="t ms" style="left:519.8px;top:346.6px;transform:scaleX(0.858);">Bandpass box (1 vent)</span>
<div class="radio" style="left:502px;top:363px"></div>
<span class="t ms" style="left:519.8px;top:361.6px;transform:scaleX(0.854);">Bandpass box (2 vents)</span>
<div class="radio" style="left:502px;top:378px"></div>
<span class="t ms" style="left:519.8px;top:376.6px;transform:scaleX(0.849);">Measured response</span>
<span class="t ms" style="left:501.4px;top:402.7px;transform:scaleX(0.849);">Vb [liter]</span>
<span class="t ms" style="left:562.2px;top:402.7px;transform:scaleX(0.826);">Viso [%]</span>
<span class="t ms" style="left:625.8px;top:402.7px;transform:scaleX(0.780);">Qb</span>
<div class="sunk" style="left:498px;top:419px;width:57px;height:21px"></div>
<span class="t ms" style="left:502.0px;top:421.5px;transform:scaleX(0.855);">45</span>
<div class="sunk" style="left:562px;top:419px;width:57px;height:21px"></div>
<span class="t ms" style="left:566.0px;top:421.5px;transform:scaleX(0.855);">0</span>
<div class="sunk" style="left:625px;top:419px;width:57px;height:21px"></div>
<span class="t ms" style="left:629.0px;top:421.5px;transform:scaleX(0.855);">20</span>
<span class="t ms" style="left:688.6px;top:405.7px;transform:scaleX(0.868);">f0 in closed box: 34,22 Hz</span>
<span class="t ms" style="left:688.6px;top:422.1px;transform:scaleX(0.866);">Q  in closed box: 0,3512</span>
<span class="t ms" style="left:688.8px;top:368.2px;transform:scaleX(0.862);">Effective Vb: 45 liters</span>
<div class="abs" style="left:714px;top:281px;width:74px;height:74px;background:#fff;border:1px solid #fff"></div><div class="abs" style="left:713px;top:280px;width:74px;height:74px;border:1px solid #868686"></div>
<svg width="75" height="75" viewBox="713 280 75 75" style="left:713px;top:280px" shape-rendering="crispEdges"><path d="M766.5,287V282.5H715.5V351.5H766.5V343.5H744M744,329.5H766.5V317.5" fill="none" stroke="#000" stroke-width="1"/><rect x="750.5" y="297.5" width="5" height="10" fill="none" stroke="#000"/><path d="M766.5,287L755.5,297.5M755.5,307.5L766.5,317.5" fill="none" stroke="#000" stroke-width="1" shape-rendering="auto"/></svg>
<div class="sb" style="left:483px;top:725px;width:374px;height:17px"></div>
<svg width="13" height="13" viewBox="0 0 13 13" style="left:843px;top:728px"><path d="M12,1L1,12M12,5L5,12M12,9L9,12" stroke="#808080" stroke-width="2" fill="none"/><path d="M12,0L0,12M12,4L4,12M12,8L8,12" stroke="#fff" stroke-width="1" fill="none"/></svg>
<svg width="860" height="747" viewBox="0 0 860 747" style="left:0;top:0;pointer-events:none" font-family="'Liberation Sans',sans-serif"><defs><mask id="wm" maskUnits="userSpaceOnUse" x="0" y="464" width="860" height="108"><rect x="0" y="464" width="860" height="108" fill="#fff"/><g font-size="40" font-weight="bold" fill="#000" fill-opacity=".95"><text x="51.7" y="530" textLength="393.8" lengthAdjust="spacingAndGlyphs">Protect more of your</text><text x="452" y="530" textLength="193" lengthAdjust="spacingAndGlyphs">memories</text><text x="658" y="530" textLength="147" lengthAdjust="spacingAndGlyphs">for less!</text></g></mask></defs><rect x="0" y="464" width="860" height="108" fill="#fff" fill-opacity=".585" mask="url(#wm)"/><text x="321" y="371" font-size="78" fill="#fff" fill-opacity=".46" textLength="424" lengthAdjust="spacingAndGlyphs">photobucket</text></svg>
<div class="abs" style="left:497px;top:496px;width:121px;height:25px;background:#edebe8;border:1px solid;border-color:#fff #5c5c5c #5c5c5c #fff;box-shadow:inset -1px -1px 0 #b4b2ae"></div>
<span class="t ms" style="left:519.4px;top:501.7px;transform:scaleX(0.861);color:#fff">Baffle designer...</span><span class="t ms" style="left:518.4px;top:500.7px;transform:scaleX(0.861);color:#8e8e8e">Baffle designer...</span>
</div>
</body></html>
